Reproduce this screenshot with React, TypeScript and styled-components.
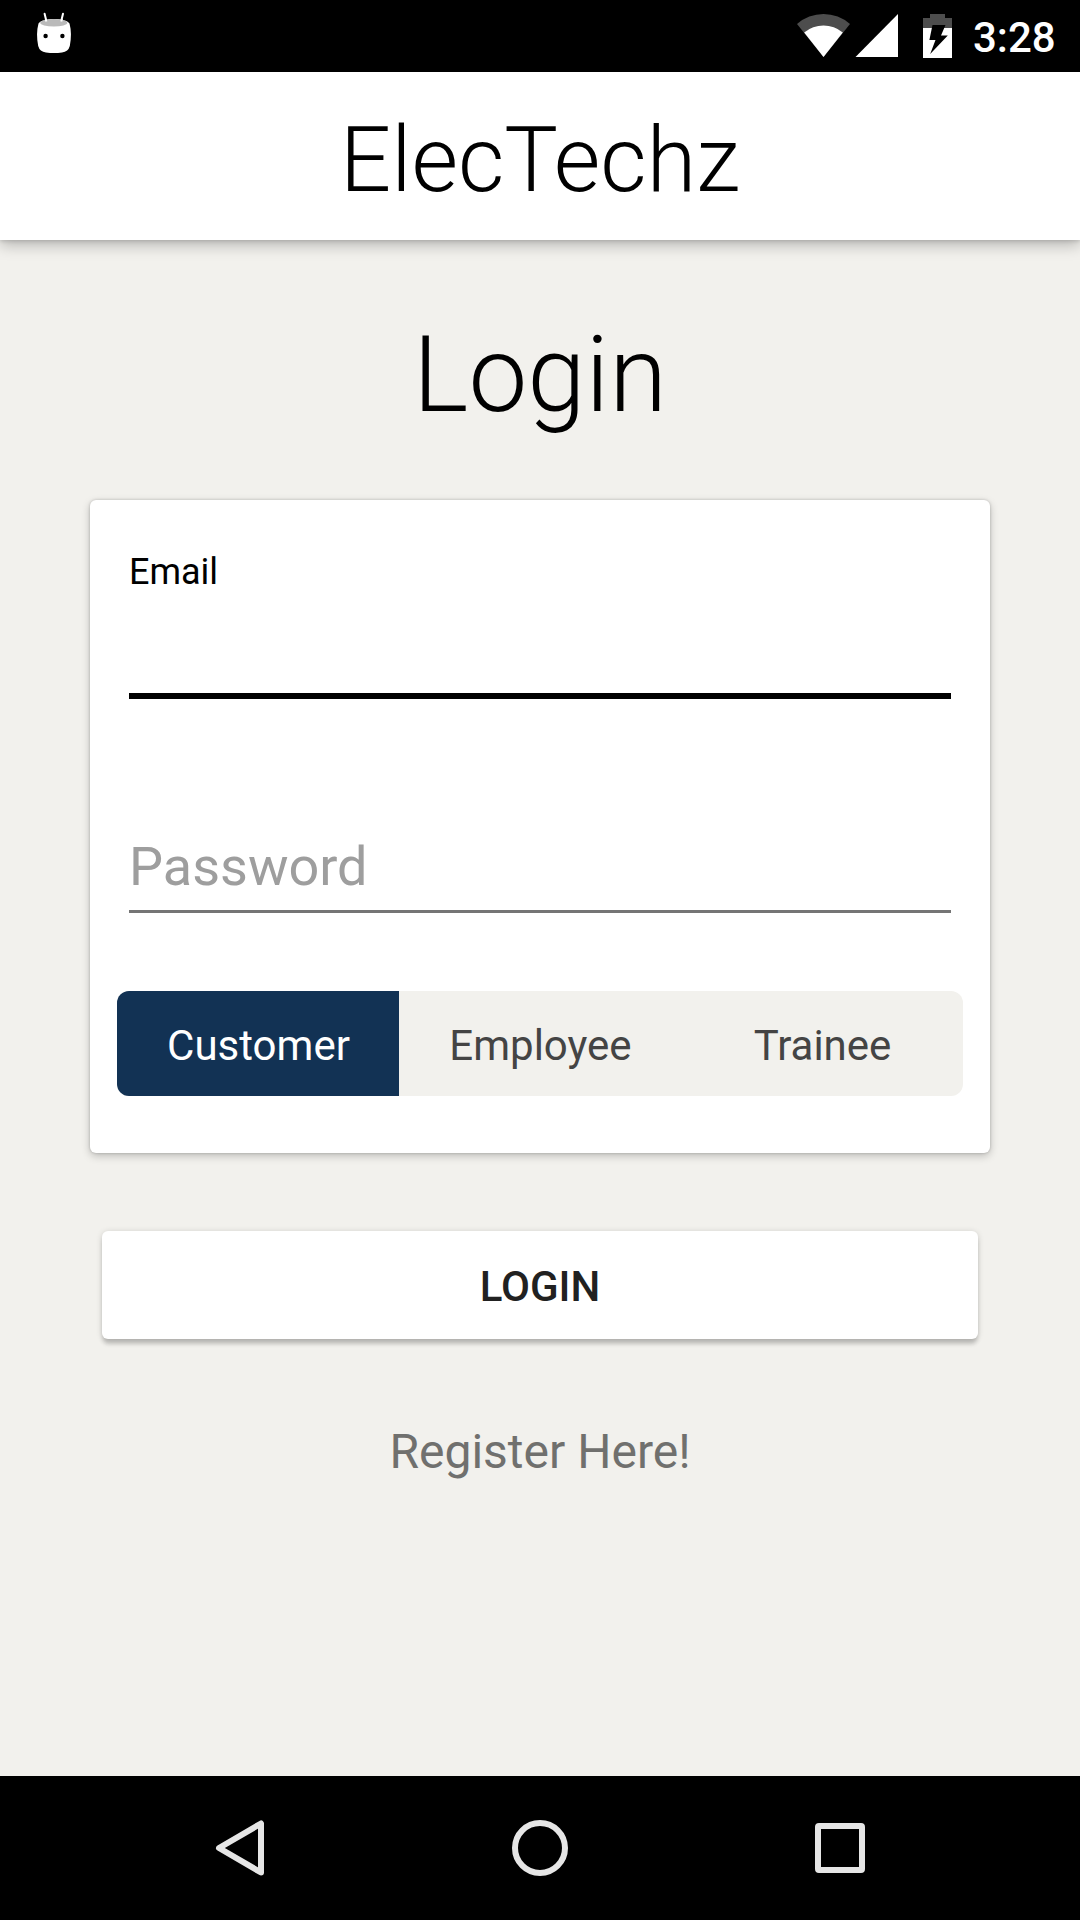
import React, { useState } from "react";
import styled, { createGlobalStyle } from "styled-components";

const GlobalStyle = createGlobalStyle`
  *, *::before, *::after { box-sizing: border-box; }
  body { margin: 0; background: #f2f1ed; }
  button, input { font: inherit; border: 0; padding: 0; background: none; outline: 0; }
`;

const Screen = styled.div`
  width: 1080px;
  height: 1920px;
  display: flex;
  flex-direction: column;
  overflow: hidden;
  background: #f2f1ed;
  color: #000;
  font-family: Roboto, "Liberation Sans", sans-serif;
`;

const StatusBar = styled.div`
  height: 72px;
  flex: none;
  display: flex;
  justify-content: space-between;
  background: #000;
  color: #fff;
`;

const StatusIcons = styled.div`
  display: flex;
  padding-right: 25px;
`;

const Clock = styled.span`
  width: 82px;
  text-align: right;
  font-size: 42px;
  font-weight: 500;
  line-height: 76px;
  white-space: nowrap;
`;

const AppBar = styled.header`
  height: 168px;
  flex: none;
  padding-top: 9px;
  background: #fff;
  box-shadow: 0 5px 14px rgba(0, 0, 0, 0.25), 0 1px 4px rgba(0, 0, 0, 0.14);
  text-align: center;
`;

const AppName = styled.h1`
  margin: 0;
  font-size: 90px;
  font-weight: 300;
  line-height: 160px;
`;

const Content = styled.main`
  flex: 1;
  display: flex;
  flex-direction: column;
  align-items: center;
`;

const Title = styled.h2`
  margin: 76px 0 64px;
  font-size: 105px;
  font-weight: 300;
  line-height: 120px;
`;

const Card = styled.section`
  width: 900px;
  height: 653px;
  padding: 50px 27px 0;
  border-radius: 6px;
  background: #fff;
  box-shadow: 0 3px 9px rgba(0, 0, 0, 0.22), 0 0 3px rgba(0, 0, 0, 0.2);
`;

const Field = styled.label<{ $height: number }>`
  display: flex;
  flex-direction: column;
  height: ${(p) => p.$height}px;
  margin: 0 12px;
`;

const FieldLabel = styled.span`
  font-size: 36px;
  line-height: 44px;
`;

const FieldInput = styled.input<{ $focused?: boolean }>`
  flex: 1;
  width: 100%;
  min-height: 0;
  border-radius: 0;
  border-bottom: ${(p) => (p.$focused ? "6px solid #000" : "3px solid #757575")};
  font-size: 54px;
  caret-color: transparent;
  &::placeholder { color: #9e9e9e; opacity: 1; }
`;

const PasswordField = styled(Field)`
  margin-top: 121px;
  ${FieldInput} { padding-top: 2px; }
`;

const Segments = styled.div`
  display: flex;
  height: 105px;
  margin-top: 78px;
  border-radius: 12px;
  overflow: hidden;
  background: #f2f1ed;
`;

const Segment = styled.button<{ $active: boolean }>`
  flex: 1;
  padding: 4px 0 0 1px;
  background: ${(p) => (p.$active ? "#123254" : "transparent")};
  color: ${(p) => (p.$active ? "#fff" : "#444")};
  font-size: 42px;
`;

const LoginButton = styled.button`
  width: 876px;
  height: 108px;
  margin-top: 78px;
  padding-top: 3px;
  border-radius: 6px;
  background: #fff;
  box-shadow: 0 6px 4px -1px rgba(0, 0, 0, 0.18), 0 1px 6px rgba(0, 0, 0, 0.16);
  color: #212121;
  font-size: 42px;
  font-weight: 500;
`;

const RegisterLink = styled.a`
  margin-top: 83px;
  color: #70706e;
  font-size: 48px;
  line-height: 60px;
`;

const NavBar = styled.nav`
  height: 144px;
  flex: none;
  display: flex;
  justify-content: center;
  align-items: center;
  gap: 240px;
  background: #000;
`;

const NavIcon = styled.svg`
  display: block;
  width: 60px;
  height: 60px;
  fill: none;
  stroke: #e6e6e6;
  stroke-width: 6;
  stroke-linejoin: round;
`;

const RobotIcon = () => (
  <svg width="90" height="72" viewBox="0 0 90 72">
    <path d="M44.6 13.8 46.6 22M63 13.8 61 22" stroke="#fff" strokeWidth="2" strokeLinecap="round" />
    <path
      d="M38.5 23.5C42 17.5 66 17.5 69.5 23.5C71.4 30 71.4 38 69.8 46Q68.3 51.8 62 52.4Q54 53.4 46 52.4Q39.7 51.8 38.2 46C36.6 38 36.6 30 38.5 23.5Z"
      fill="#fff"
    />
    <ellipse cx="53.8" cy="22.8" rx="13.6" ry="3.7" fill="#bababa" />
    <path d="M45.7 19 46.4 21.5M62 19 61.2 21.5" stroke="#fff" strokeWidth="2" />
    <circle cx="45.6" cy="36" r="2.2" fill="#000" />
    <circle cx="62.4" cy="36" r="2.2" fill="#000" />
  </svg>
);

const SignalIcons = () => (
  <svg width="183" height="72" viewBox="790 0 183 72">
    <path d="M823.5 57 797 24A40 40 0 0 1 850 24Z" fill="#4d4d4d" />
    <path d="M823.5 57 804.2 32.5A30 30 0 0 1 842.8 32.5Z" fill="#fff" />
    <path d="M855.5 57 898 14V57Z" fill="#fff" />
    <path d="M923 28V18H930V14H945V18H952V28Z" fill="#4d4d4d" />
    <path d="M923 28H952V58H923Z" fill="#fff" />
    <path d="M932.5 25H945.5L941 35.6H947.8L930.2 54L935.5 40H929.4Z" fill="#000" />
  </svg>
);

const roles = ["Customer", "Employee", "Trainee"];

export default function App() {
  const [role, setRole] = useState(roles[0]);

  return (
    <Screen>
      <GlobalStyle />
      <StatusBar>
        <RobotIcon />
        <StatusIcons>
          <SignalIcons />
          <Clock>3:28</Clock>
        </StatusIcons>
      </StatusBar>
      <AppBar>
        <AppName>ElecTechz</AppName>
      </AppBar>
      <Content>
        <Title>Login</Title>
        <Card>
          <Field $height={149}>
            <FieldLabel>Email</FieldLabel>
            <FieldInput type="email" $focused />
          </Field>
          <PasswordField $height={93}>
            <FieldInput type="password" placeholder="Password" />
          </PasswordField>
          <Segments>
            {roles.map((name) => (
              <Segment key={name} $active={name === role} onClick={() => setRole(name)}>
                {name}
              </Segment>
            ))}
          </Segments>
        </Card>
        <LoginButton>LOGIN</LoginButton>
        <RegisterLink>Register Here!</RegisterLink>
      </Content>
      <NavBar>
        <NavIcon viewBox="0 0 60 60">
          <path d="M51 5.5V54.5L9 30Z" />
        </NavIcon>
        <NavIcon viewBox="0 0 60 60">
          <circle cx="30" cy="30" r="25" />
        </NavIcon>
        <NavIcon viewBox="0 0 60 60">
          <rect x="8" y="8" width="44" height="44" rx="1" />
        </NavIcon>
      </NavBar>
    </Screen>
  );
}
